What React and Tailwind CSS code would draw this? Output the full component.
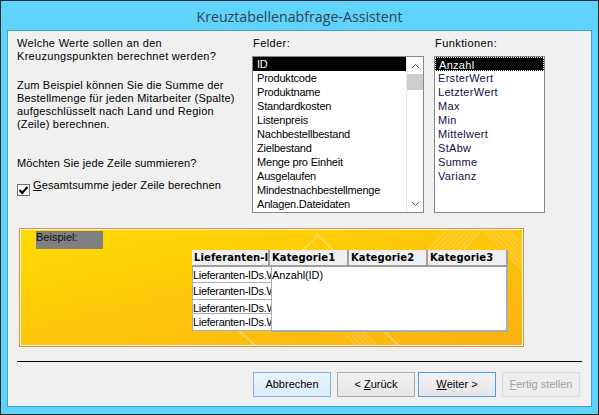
import React from "react";

const fields = [
  "ID",
  "Produktcode",
  "Produktname",
  "Standardkosten",
  "Listenpreis",
  "Nachbestellbestand",
  "Zielbestand",
  "Menge pro Einheit",
  "Ausgelaufen",
  "Mindestnachbestellmenge",
  "Anlagen.Dateidaten",
];

const functions = [
  "Anzahl",
  "ErsterWert",
  "LetzterWert",
  "Max",
  "Min",
  "Mittelwert",
  "StAbw",
  "Summe",
  "Varianz",
];

const Chevron = ({ up }) => (
  <svg width="9" height="6" viewBox="0 0 9 6" fill="none" stroke="#5a5a5a" strokeWidth="1">
    <path d={up ? "M1 5 L4.5 1.5 L8 5" : "M1 1 L4.5 4.5 L8 1"} />
  </svg>
);

// decorative stripes on the yellow sample panel
const PanelArt = () => (
  <svg className="absolute inset-0" width="503" height="116" viewBox="0 0 503 116" fill="none">
    <path d="M262 40 L297 5 L332 40" stroke="#ffffff" strokeOpacity="0.3" strokeWidth="2" />
    <path d="M215 98 L235 116" stroke="#ffffff" strokeOpacity="0.3" strokeWidth="2" />
    <g stroke="#ffffff" strokeOpacity="0.14" strokeWidth="2">
      <path d="M398 30 L426 0" />
      <path d="M403 30 L431 0" />
      <path d="M408 30 L436 0" />
      <path d="M413 30 L441 0" />
      <path d="M418 30 L446 0" />
      <path d="M423 30 L451 0" />
      <path d="M428 30 L456 0" />
      <path d="M433 30 L461 0" />
      <path d="M462 0 L503 42" />
      <path d="M467 0 L503 37" />
      <path d="M472 0 L503 32" />
      <path d="M477 0 L503 27" />
      <path d="M482 0 L503 22" />
      <path d="M487 0 L503 17" />
      <path d="M320 100 L336 116" />
      <path d="M325 100 L341 116" />
      <path d="M330 100 L346 116" />
      <path d="M335 100 L351 116" />
      <path d="M340 100 L356 116" />
    </g>
    <path d="M362 100 L378 116" stroke="#ffffff" strokeOpacity="0.35" strokeWidth="2" />
  </svg>
);

const HeaderCell = ({ children, className }) => (
  <div
    className={
      "h-[17px] bg-[#f0f0f0] border-r-2 border-b-2 border-[#a0a0a0] pl-[2px] font-bold text-[10px] leading-[16px] tracking-[0.1px] text-black overflow-hidden whitespace-nowrap font-['DejaVu_Sans',sans-serif] " +
      className
    }
  >
    {children}
  </div>
);

const RowCell = ({ className }) => (
  <div
    className={
      "bg-white border-b border-[#a9adb5] text-[11px] tracking-[-0.3px] text-black whitespace-nowrap overflow-hidden " +
      className
    }
  >
    Lieferanten-IDs.W
  </div>
);

const Button = ({ children, className }) => (
  <button className={"h-[25px] w-[78px] border text-[11px] flex items-center justify-center " + className}>
    {children}
  </button>
);

export default function App() {
  return (
    <div className="w-[599px] h-[415px] bg-[#5fd3fb] border border-[#1c2a30] flex flex-col font-['Liberation_Sans',sans-serif] overflow-hidden">
      <div className="h-[29px] shrink-0 pt-[1px] text-center text-[14.2px] leading-[29px] text-[#2c4552] font-['Open_Sans',sans-serif]">
        Kreuztabellenabfrage-Assistent
      </div>

      <div className="mx-[6px] w-[585px] h-[377px] bg-[#f0f0f0] border border-[#3fa4cc] text-[11px] text-black">
        {/* top part */}
        <div className="flex h-[197px]">
          <div className="w-[244px] pl-[9px] pt-[6px] shrink-0 leading-[13px]">
            <p className="tracking-[0.3px]">
              Welche Werte sollen an den
              <br />
              Kreuzungspunkten berechnet werden?
            </p>
            <p className="mt-[16px] tracking-[0.2px]">
              Zum Beispiel können Sie die Summe der
              <br />
              Bestellmenge für jeden Mitarbeiter (Spalte)
              <br />
              aufgeschlüsselt nach Land und Region
              <br />
              (Zeile) berechnen.
            </p>
            <p className="mt-[26px] tracking-[0.12px]">Möchten Sie jede Zeile summieren?</p>
            <label className="flex items-start mt-[9px] tracking-[0.12px]">
              <span className="w-[13px] h-[12px] mt-[5px] border border-[#707070] bg-[#fafafa] flex items-center justify-center shrink-0">
                <svg width="11" height="9" viewBox="0 0 11 9" fill="none" stroke="#000" strokeWidth="2">
                  <path d="M1.5 4 L4.2 7 L9.5 1" />
                </svg>
              </span>
              <span className="ml-[3px]">
                <span className="underline">G</span>esamtsumme jeder Zeile berechnen
              </span>
            </label>
          </div>

          <div className="w-[172px] shrink-0 pt-[6px]">
            <div className="h-[13px] leading-[13px] pl-[1px] tracking-[0.42px]">Felder:</div>
            <div className="mt-[6px] h-[157px] border border-[#828790] bg-white flex">
              <div className="flex-1 min-w-0 tracking-[-0.2px]">
                {fields.map((f, i) => (
                  <div
                    key={f}
                    className={
                      "h-[14px] leading-[14px] pl-[4px] whitespace-nowrap " +
                      (i === 0 ? "bg-black text-white" : "text-black")
                    }
                  >
                    {f}
                  </div>
                ))}
              </div>
              <div className="w-[17px] shrink-0 flex flex-col bg-white border-l border-[#e8e8e8]">
                <div className="h-[17px] flex items-center justify-center">
                  <Chevron up />
                </div>
                <div className="h-[16px] bg-[#cdcdcd]" />
                <div className="flex-1" />
                <div className="h-[17px] flex items-center justify-center">
                  <Chevron />
                </div>
              </div>
            </div>
          </div>

          <div className="w-[111px] shrink-0 ml-[10px] pt-[6px]">
            <div className="h-[13px] leading-[13px] pl-[1px] tracking-[0.42px]">Funktionen:</div>
            <div className="mt-[6px] h-[157px] border border-[#828790] bg-white">
              {functions.map((f, i) => (
                <div
                  key={f}
                  className={
                    "h-[14px] leading-[14px] pl-[3px] tracking-[0.3px] " +
                    (i === 0 ? "bg-black text-white border border-dotted border-white leading-[12px] pl-[2px]" : "text-[#10104a]")
                  }
                >
                  {f}
                </div>
              ))}
            </div>
          </div>
        </div>

        {/* sample panel */}
        <div className="relative ml-[11px] w-[505px] h-[119px] border border-[#f58a1f] bg-gradient-to-br from-[#ffdc00] to-[#fbb012] overflow-hidden">
          <div className="relative border border-white h-[117px]">
            <PanelArt />
            <div className="relative ml-[15px] mt-[1px] w-[67px] h-[18px] bg-[#808080] leading-[13px] text-[#111]">
              Beispiel:
            </div>
            <div className="relative ml-[171px] mt-[1px] w-[316px]">
              <div className="flex">
                <HeaderCell className="w-[78px]">Lieferanten-I</HeaderCell>
                <HeaderCell className="w-[79px]">Kategorie1</HeaderCell>
                <HeaderCell className="w-[79px]">Kategorie2</HeaderCell>
                <HeaderCell className="w-[80px]">Kategorie3</HeaderCell>
              </div>
              <div className="flex">
                <div className="w-[79px] shrink-0 border-l border-[#a9adb5]">
                  <RowCell className="h-[16px] leading-[16px]" />
                  <RowCell className="h-[17px] leading-[17px]" />
                  <RowCell className="h-[14px] leading-[17px]" />
                  <RowCell className="h-[17px] leading-[17px]" />
                </div>
                <div className="flex-1 h-[65px] bg-white border-l border-r-2 border-b-2 border-[#a9adb5] text-[11px] leading-[16px] tracking-[-0.1px]">
                  Anzahl(ID)
                </div>
              </div>
            </div>
          </div>
        </div>

        <div className="ml-[9px] mt-[14px] w-[565px] h-px bg-black" />

        {/* buttons */}
        <div className="flex mt-[10px] ml-[245px]">
          <Button className="bg-gradient-to-b from-[#eaf4fc] to-[#dcecfb] border-[#7eb4ea]">Abbrechen</Button>
          <Button className="ml-[6px] w-[77px] bg-gradient-to-b from-[#f2f2f2] to-[#e5e5e5] border-[#acacac]">
            &lt;&nbsp;<span className="underline">Z</span>urück
          </Button>
          <Button className="ml-[3px] bg-gradient-to-b from-[#f2f2f2] to-[#e5e5e5] border-[#4a9ef0]">
            <span className="underline">W</span>eiter &gt;
          </Button>
          <Button className="ml-[6px] bg-[#eeeeee] border-[#d9d9d9] text-[#a0a0a0]">
            <span className="underline">F</span>ertig stellen
          </Button>
        </div>
      </div>
    </div>
  );
}
